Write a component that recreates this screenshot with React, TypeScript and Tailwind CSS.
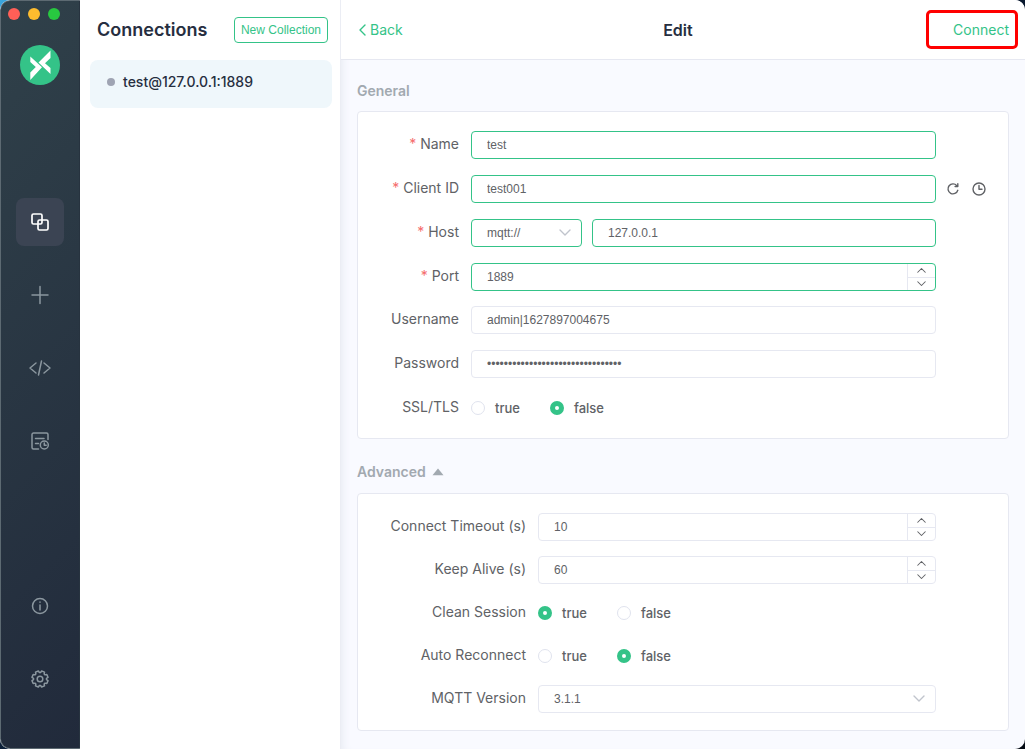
import { useState } from 'react'
import type { ReactNode } from 'react'

const inputBase = "w-full h-7 rounded border bg-white px-[15px] font-['Liberation_Sans',sans-serif] text-xs text-[#606266] outline-none"
const borderOf = (required?: boolean) => (required ? 'border-[#34c388]' : 'border-[#e6e8f1]')

const Chevron = ({ up, className }: { up?: boolean; className: string }) => (
  <svg viewBox="0 0 12 8" className={className} fill="none" stroke="currentColor" strokeWidth="1.4" strokeLinecap="round" strokeLinejoin="round">
    <path d={up ? 'M1 7l5-5 5 5' : 'M1 1l5 5 5-5'} />
  </svg>
)

const Icon = ({ children }: { children: ReactNode }) => (
  <svg viewBox="0 0 24 24" width="24" height="24" fill="none" stroke="currentColor" strokeWidth="1.5" strokeLinecap="round" strokeLinejoin="round">
    {children}
  </svg>
)

const Logo = () => (
  <svg viewBox="0 0 40 40" className="size-10 shrink-0">
    <circle cx="20" cy="20" r="20" fill="#34c388" />
    <path fill="#fff" d="M10.300 11.500L22 22.300 10.300 35v-7.500l5.500-5.500-5.500-5zM30.500 5.500v7.500L25 18.200l5.500 4.800v6L18.500 17.500z" />
  </svg>
)

// eight teeth, with the notches pointing up, down, left and right
const gearPath =
  Array.from({ length: 8 }, (_, i) => {
    const mid = 22.5 + i * 45
    return [[-17, 6.5], [-11, 8.2], [11, 8.2], [17, 6.5]]
      .map(([offset, r]) => {
        const a = ((mid + offset) * Math.PI) / 180
        return `${12 + r * Math.sin(a)} ${12 - r * Math.cos(a)}`
      })
      .join('L')
  }).reduce((d, p, i) => d + (i ? 'L' : 'M') + p, '') + 'z'

const topNav = [
  {
    label: 'Connections',
    icon: (
      <g strokeWidth="1.700">
        <rect x="4" y="4" width="10" height="10" rx="1.500" />
        <rect x="10" y="10" width="10" height="10" rx="1.500" />
      </g>
    ),
  },
  { label: 'New connection', icon: <path d="M12 3.500v17M4 12h16" /> },
  { label: 'Scripts', icon: <path d="M8 7l-6 5 6 5M16 7l6 5-6 5M13.500 5l-3 14" /> },
  {
    label: 'Log',
    icon: (
      <g>
        <path d="M10.500 20H5.500A1.500 1.500 0 0 1 4 18.500v-13A1.500 1.500 0 0 1 5.500 4h13A1.500 1.500 0 0 1 20 5.500V10.500M7.500 9.500h8.500M7.500 14.500H10.500" />
        <circle cx="16.300" cy="16" r="4" />
        <path d="M16.300 14v2.300h1.900" />
      </g>
    ),
  },
]

const bottomNav = [
  {
    label: 'About',
    icon: (
      <g>
        <circle cx="12" cy="12" r="7.500" />
        <path d="M12 11v5M12 8v.3" />
      </g>
    ),
  },
  {
    label: 'Settings',
    icon: (
      <g>
        <circle cx="12" cy="12" r="2.800" />
        <path d={gearPath} />
      </g>
    ),
  },
]

function NavButton({ label, icon, active }: { label: string; icon: ReactNode; active?: boolean }) {
  return (
    <button
      aria-label={label}
      className={`flex size-12 items-center justify-center rounded-lg ${active ? 'bg-[#3b4453] text-white' : 'text-[#8b979f]'}`}
    >
      <Icon>{icon}</Icon>
    </button>
  )
}

interface RowProps {
  label: string
  id?: string
  required?: boolean
  wide?: boolean
  suffix?: ReactNode
  children: ReactNode
}

function Row({ label, id, required, wide, suffix, children }: RowProps) {
  return (
    <div className="flex h-7 items-center">
      <label
        htmlFor={id}
        id={id ? undefined : label}
        className={`shrink-0 pr-3 pb-0.5 text-right text-sm text-[#606266] ${wide ? 'w-[180px]' : 'w-[113px]'}`}
      >
        {required && <span className="mr-1 text-[#f56c6c]">*</span>}
        {label}
      </label>
      <div className="flex min-w-0 flex-1 items-center gap-2.5">{children}</div>
      <div className="flex w-[72px] shrink-0 items-center gap-3 pl-2.5 text-[#606266]">{suffix}</div>
    </div>
  )
}

function NumberInput({ id, initial, required }: { id: string; initial: number; required?: boolean }) {
  const [value, setValue] = useState(initial)
  return (
    <div className={`flex h-7 w-full overflow-hidden rounded border bg-white ${borderOf(required)}`}>
      <input
        id={id}
        type="number"
        value={value}
        onChange={e => setValue(Number(e.target.value))}
        className="min-w-0 flex-1 px-[15px] font-['Liberation_Sans',sans-serif] text-xs text-[#606266] outline-none [appearance:textfield]"
      />
      <div className="flex w-7 flex-col border-l border-[#e6e8f1] text-[#606266]">
        <button type="button" aria-label={`Increase ${id}`} onClick={() => setValue(v => v + 1)} className="flex flex-1 items-center justify-center border-b border-[#e6e8f1]">
          <Chevron up className="h-[6px] w-[9px]" />
        </button>
        <button type="button" aria-label={`Decrease ${id}`} onClick={() => setValue(v => v - 1)} className="flex flex-1 items-center justify-center">
          <Chevron className="h-[6px] w-[9px]" />
        </button>
      </div>
    </div>
  )
}

function SelectInput({ id, label, options, required }: { id: string; label?: string; options: string[]; required?: boolean }) {
  return (
    <div className="relative w-full">
      <select id={id} aria-label={label} className={`${inputBase} appearance-none ${borderOf(required)}`}>
        {options.map(o => <option key={o}>{o}</option>)}
      </select>
      <Chevron className="pointer-events-none absolute top-[10px] right-[11px] h-2 w-3 text-[#c0c4cc]" />
    </div>
  )
}

function BoolRadio({ name, initial }: { name: string; initial: boolean }) {
  const [value, setValue] = useState(initial)
  return (
    <div role="radiogroup" aria-labelledby={name} className="flex gap-[30px]">
      {[true, false].map(v => (
        <label key={String(v)} className="flex items-center gap-2.5 text-[13px] leading-5 font-medium text-[#606266]">
          <input
            type="radio"
            name={name}
            checked={value === v}
            onChange={() => setValue(v)}
            className="size-3.5 appearance-none rounded-full border border-[#e0e3ee] bg-white checked:border-[5px] checked:border-[#34c388]"
          />
          {String(v)}
        </label>
      ))}
    </div>
  )
}

export default function App() {
  const [showAdvanced, setShowAdvanced] = useState(true)

  return (
    <div className="min-h-screen bg-[linear-gradient(135deg,#3aa5dc,#0c2340_30%,#050b14)] font-[Inter,sans-serif]">
      <div className="flex min-h-screen overflow-hidden rounded-[10px] bg-[#f9faff]">
        <aside className="flex w-20 shrink-0 flex-col items-center rounded-l-[10px] border border-[#5d6a72] border-r-[#27333f] bg-[linear-gradient(135deg,#30414a,#212a3b)] pb-[45px]">
          <div className="flex w-full gap-2 pt-[7px] pl-[7px]">
            <span className="size-3 rounded-full bg-[#ff5f57]" />
            <span className="size-3 rounded-full bg-[#febc2e]" />
            <span className="size-3 rounded-full bg-[#28c840]" />
          </div>
          <div className="mt-[25px]"><Logo /></div>
          <nav className="mt-[113px] flex flex-1 flex-col gap-[25px]">
            {topNav.map((item, i) => <NavButton key={item.label} {...item} active={i === 0} />)}
            <div className="flex-1" />
            {bottomNav.map(item => <NavButton key={item.label} {...item} />)}
          </nav>
        </aside>

        <section className="w-[260px] shrink-0 bg-white pr-2 pl-[10px]">
          <div className="flex h-15 items-center justify-between pr-1 pl-[7px]">
            <h1 className="text-lg font-semibold text-[#262e40]">Connections</h1>
            <button className="h-[26px] rounded border border-[#34c388] px-1.5 font-['Liberation_Sans',sans-serif] text-xs text-[#34c388]">
              New Collection
            </button>
          </div>
          <a href="#test" className="flex h-12 items-center gap-2 rounded-lg bg-[#eff7fb] px-[17px] pb-1 text-sm font-medium text-[#262e40]">
            <span className="size-2 rounded-full bg-[#9fa4b3]" />
            test@127.0.0.1:1889
          </a>
        </section>

        <main className="min-w-0 flex-1 border-l border-[#ebedf4] shadow-[inset_8px_0_8px_-6px_#e8ebf3]">
          <header className="flex h-15 items-center justify-between border-b border-[#e6e8f1] bg-white px-4">
            <button className="flex items-center gap-1 pl-0.5 text-sm text-[#34c388]">
              <svg viewBox="0 0 7 12" className="h-3 w-[7px]" fill="none" stroke="currentColor" strokeWidth="1.400" strokeLinecap="round" strokeLinejoin="round">
                <path d="M6 1L1 6l5 5" />
              </svg>
              Back
            </button>
            <h2 className="text-base font-semibold text-[#262e40]">Edit</h2>
            <div className="relative flex">
              <button className="text-sm text-[#34c388]">Connect</button>
              <span className="pointer-events-none absolute -top-[10px] -right-[9px] h-[39px] w-[92px] rounded-[5px] border-[3px] border-[#ff0000]" />
            </div>
          </header>

          <form className="px-4 pt-5 pb-[18px]" onSubmit={e => e.preventDefault()}>
            <h3 className="text-sm leading-[22px] font-semibold text-[#a2a9b0]">General</h3>
            <div className="mt-[9px] rounded border border-[#e6e8f1] bg-white pt-[19px] pb-4">
              <div className="flex flex-col gap-4">
                <Row label="Name" id="name" required>
                  <input id="name" defaultValue="test" className={`${inputBase} ${borderOf(true)}`} />
                </Row>
                <Row
                  label="Client ID"
                  id="clientId"
                  required
                  suffix={
                    <>
                      <button type="button" aria-label="Refresh client ID">
                        <svg viewBox="0 0 14 14" className="size-3.5" fill="none" stroke="currentColor" strokeWidth="1.400" strokeLinecap="round" strokeLinejoin="round">
                          <path d="M11.800 8.300A5 5 0 1 1 10.800 3.600M11.800 1.800v2.700H9.100" />
                        </svg>
                      </button>
                      <button type="button" aria-label="Client ID with timestamp">
                        <svg viewBox="0 0 14 14" className="size-3.5" fill="none" stroke="currentColor" strokeWidth="1.400" strokeLinecap="round" strokeLinejoin="round">
                          <circle cx="7" cy="7" r="6" />
                          <path d="M7 3.500V7.300h3" />
                        </svg>
                      </button>
                    </>
                  }
                >
                  <input id="clientId" defaultValue="test001" className={`${inputBase} ${borderOf(true)}`} />
                </Row>
                <Row label="Host" id="host" required>
                  <div className="w-[111px] shrink-0">
                    <SelectInput id="protocol" label="Protocol" options={['mqtt://', 'ws://', 'mqtts://', 'wss://']} required />
                  </div>
                  <input id="host" defaultValue="127.0.0.1" className={`${inputBase} ${borderOf(true)}`} />
                </Row>
                <Row label="Port" id="port" required>
                  <NumberInput id="port" initial={1889} required />
                </Row>
              </div>
              <div className="mt-[15px] flex flex-col gap-4">
                <Row label="Username" id="username">
                  <input id="username" defaultValue="admin|1627897004675" className={`${inputBase} ${borderOf()}`} />
                </Row>
                <Row label="Password" id="password">
                  <input id="password" type="password" defaultValue="00000000000000000000000000000000" className={`${inputBase} ${borderOf()}`} />
                </Row>
                <Row label="SSL/TLS">
                  <BoolRadio name="SSL/TLS" initial={false} />
                </Row>
              </div>
            </div>

            <h3 className="mt-[22px] text-sm leading-[22px] font-semibold text-[#a2a9b0]">
              <button type="button" onClick={() => setShowAdvanced(s => !s)} className="flex items-center gap-1.5">
                Advanced
                <svg viewBox="0 0 12 8" className={`h-2 w-3 ${showAdvanced ? '' : 'rotate-180'}`} fill="currentColor">
                  <path d="M6 .5L11.500 7.200H.5z" />
                </svg>
              </button>
            </h3>
            {showAdvanced && (
              <div className="mt-[10px] flex flex-col gap-[15px] rounded border border-[#e6e8f1] bg-white pt-[19px] pb-[17px]">
                <Row label="Connect Timeout (s)" id="timeout" wide>
                  <NumberInput id="timeout" initial={10} />
                </Row>
                <Row label="Keep Alive (s)" id="keepalive" wide>
                  <NumberInput id="keepalive" initial={60} />
                </Row>
                <Row label="Clean Session" wide>
                  <BoolRadio name="Clean Session" initial />
                </Row>
                <Row label="Auto Reconnect" wide>
                  <BoolRadio name="Auto Reconnect" initial={false} />
                </Row>
                <Row label="MQTT Version" id="version" wide>
                  <SelectInput id="version" options={['3.1.1', '5.0']} />
                </Row>
              </div>
            )}
          </form>
        </main>
      </div>
    </div>
  )
}
